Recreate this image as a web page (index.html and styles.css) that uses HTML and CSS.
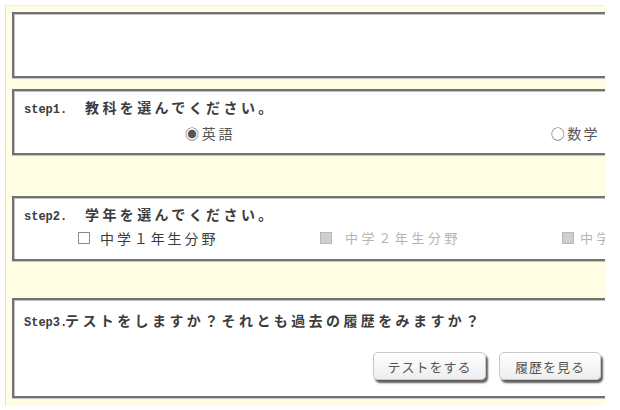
FILE: index.html
```html
<!DOCTYPE html>
<html lang="ja">
<head>
  <meta charset="UTF-8" />
  <title>テスト</title>
  <link rel="stylesheet" href="styles.css">
</head>
<body>
  <div class="frame">
    <div class="panel panel-blank"></div>

    <div class="panel panel-step1">
      <p class="step-title"><span class="step-no">step1.</span><span class="step-text">教科を選んでください。</span></p>
      <div class="subject-row">
        <span class="choice">◉英語</span>
        <span class="choice choice-right">○数学</span>
      </div>
    </div>

    <div class="panel panel-step2">
      <p class="step-title"><span class="step-no">step2.</span><span class="step-text">学年を選んでください。</span></p>
      <div class="grade-row">
        <label class="grade"><span class="box"></span>中学１年生分野</label>
        <label class="grade disabled"><span class="box"></span>中学２年生分野</label>
        <label class="grade disabled"><span class="box"></span>中学３年生分野</label>
      </div>
    </div>

    <div class="panel panel-step3">
      <p class="step-title"><span class="step-no tight">Step3.</span><span class="step-text">テストをしますか？それとも過去の履歴をみますか？</span></p>
      <div class="actions">
        <button class="btn btn-test">テストをする</button>
        <button class="btn btn-history">履歴を見る</button>
      </div>
    </div>
  </div>
</body>
</html>
```

FILE: styles.css
```css
body {
  margin: 0;
  background: #fff;
  font-family: "Noto Sans CJK JP", sans-serif;
  color: #333;
}

.frame {
  box-sizing: border-box;
  width: 600px;
  height: 401px;
  margin: 5px 0 0 5px;
  padding: 6px 0 0 6px;
  background: #fffde3;
  border-top: 1px solid #efeedc;
  border-left: 1px solid #e4e3d2;
  overflow: hidden;
}

.panel {
  box-sizing: border-box;
  width: 593px;
  background: #fff;
  border: 2px solid #727272;
  border-right: 0;
  box-shadow: 0 1px 0 #c6c6c6, inset 1px 1px 0 #c0c0c0;
}

.panel-blank {
  height: 66px;
}

.panel-step1 {
  height: 66px;
  margin-top: 11px;
  padding: 8px 5px 0 10px;
}

.panel-step2 {
  height: 65px;
  margin-top: 41px;
  padding: 8px 0 0 10px;
}

.panel-step3 {
  height: 100px;
  margin-top: 37px;
  padding: 12px 4px 0 10px;
}

.step-title {
  margin: 0;
  font-size: 14px;
  line-height: 16px;
  font-weight: bold;
  color: #3c3c3c;
  white-space: nowrap;
}

.step-no {
  display: inline-block;
  width: 61px;
  font-family: "Liberation Mono", monospace;
  font-size: 12px;
}

.step-no.tight {
  width: 41px;
}

.step-text {
  letter-spacing: 3.4px;
}

.subject-row {
  display: flex;
  margin-top: 7px;
  font-size: 14px;
  line-height: 16px;
  color: #555;
  letter-spacing: 2.8px;
}

.choice {
  margin-left: 161px;
}

.choice-right {
  margin-left: auto;
  letter-spacing: 2.4px;
}

.grade-row {
  display: grid;
  grid-template-columns: 242px 242px 242px;
  margin-top: 5px;
  padding-left: 54px;
  font-size: 14px;
  line-height: 16px;
  white-space: nowrap;
}

.grade {
  display: flex;
  align-items: center;
  letter-spacing: 2.9px;
  color: #3a3a3a;
}

.box {
  box-sizing: border-box;
  flex: none;
  width: 12px;
  height: 12px;
  margin-right: 10px;
  border: 1px solid #8a8a8a;
  background: #fff;
}

.grade.disabled {
  color: #b4b4b4;
  font-size: 13px;
  letter-spacing: 3.6px;
}

.grade.disabled .box {
  margin-right: 13px;
  border-color: #b8b8b8;
  background: #cfcfcf;
}

.grade.disabled:last-child .box {
  margin-right: 6px;
}

.actions {
  display: flex;
  justify-content: flex-end;
  gap: 13px;
  margin-top: 21px;
}

.btn {
  height: 28px;
  padding: 0;
  font-family: inherit;
  font-size: 13px;
  letter-spacing: 1px;
  color: #555;
  background: linear-gradient(#ffffff, #eeeeee);
  border: 1px solid #c8c8c8;
  border-radius: 5px;
  box-shadow: 2px 3px 2px #5e5e5e;
}

.btn-test {
  width: 113px;
}

.btn-history {
  width: 102px;
}
```
